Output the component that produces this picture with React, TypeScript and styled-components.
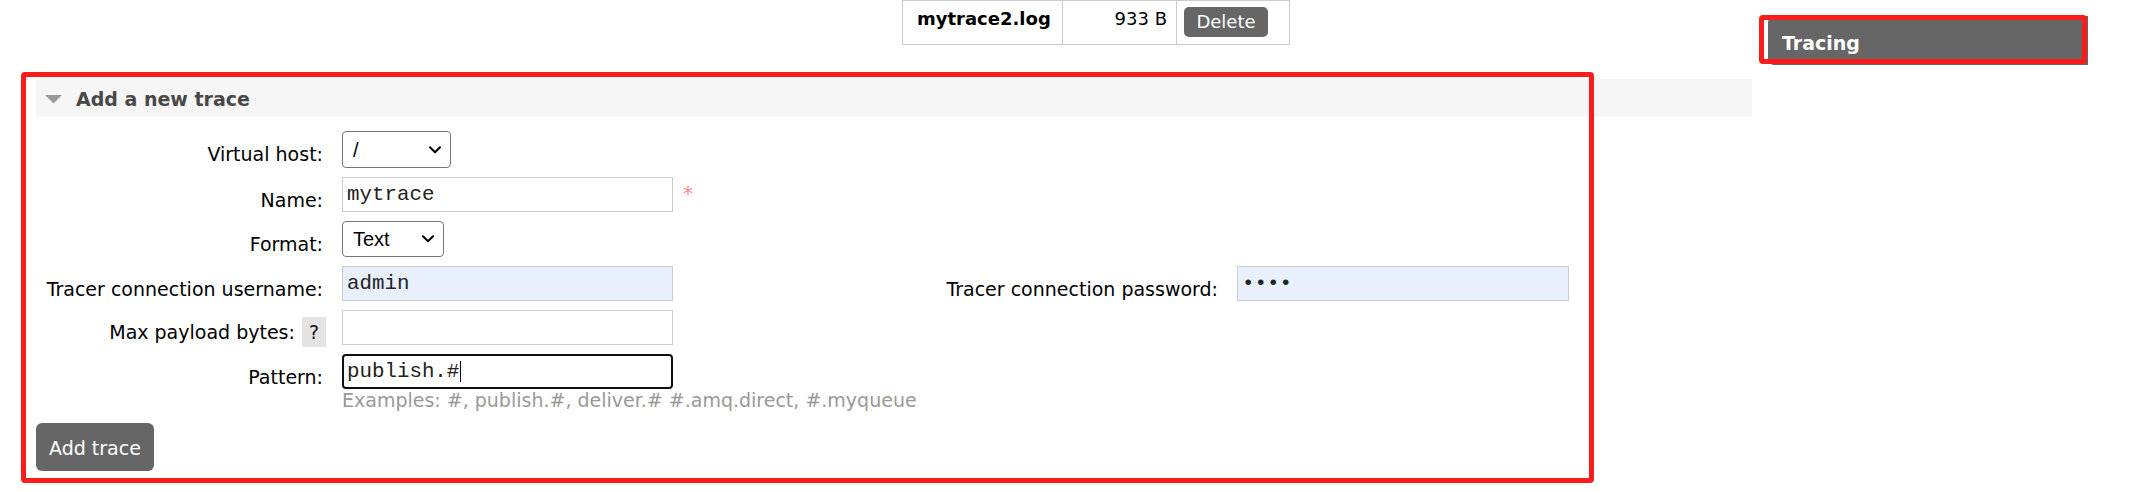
import React from "react";
import styled, { createGlobalStyle } from "styled-components";

const GlobalStyle = createGlobalStyle`
  html, body { margin: 0; padding: 0; background: #fff; }
  body {
    font-family: "DejaVu Sans", Verdana, sans-serif;
    font-size: 19px;
    color: #000;
  }
  * { box-sizing: border-box; }
`;

const Page = styled.div`
  display: flex;
  align-items: flex-start;
  gap: 16px;
  min-height: 492px;
  padding-left: 36px;
`;

const Main = styled.main`
  flex: none;
  width: 1716px;
`;

const FilesTable = styled.table`
  margin-left: 866px;
  border-collapse: collapse;
  table-layout: fixed;
  width: 387px;
  font-size: 18px;
`;

const Col = styled.col<{ $w: number }>`
  width: ${(p) => p.$w}px;
`;

const Row = styled.tr`
  height: 44px;
`;

const Td = styled.td<{ $align?: "left" | "right"; $bold?: boolean; $pl?: number; $pr?: number; $pt?: number }>`
  border: 1px solid #ccc;
  vertical-align: top;
  white-space: nowrap;
  line-height: 22px;
  padding: ${(p) => p.$pt ?? 7}px ${(p) => p.$pr ?? 9}px 0 ${(p) => p.$pl ?? 14}px;
  text-align: ${(p) => p.$align ?? "left"};
  font-weight: ${(p) => (p.$bold ? "bold" : "normal")};
`;

const SmallButton = styled.button`
  width: 84px;
  height: 30px;
  border: none;
  border-radius: 5px;
  background: #666;
  color: #fff;
  font-family: "DejaVu Sans", Verdana, sans-serif;
  font-size: 18px;
  padding: 0;
  line-height: 30px;
`;

const Section = styled.section`
  position: relative;
  margin-top: 34px;
  padding-bottom: 12px;
`;

const Annotation = styled.div<{ $l: number; $t: number; $w: number; $h: number }>`
  position: absolute;
  z-index: 5;
  left: ${(p) => p.$l}px;
  top: ${(p) => p.$t}px;
  width: ${(p) => p.$w}px;
  height: ${(p) => p.$h}px;
  border: 5px solid #fb1d1b;
  border-radius: 4px;
  pointer-events: none;
`;

const SectionHeader = styled.h2`
  margin: 0;
  height: 38px;
  display: flex;
  align-items: center;
  gap: 14px;
  padding: 2px 0 0 9px;
  background: #f6f6f6;
  color: #484848;
  font-size: 19px;
  font-weight: bold;
`;

const SectionBody = styled.div`
  padding-top: 14px;
`;

const FormGrid = styled.div`
  display: grid;
  width: 1533px;
  grid-template-columns: 290px auto 1fr auto 332px;
  column-gap: 16px;
  row-gap: 9px;
  align-items: start;
`;

const LabelCell = styled.div<{ $col?: number; $help?: boolean }>`
  grid-column: ${(p) => p.$col ?? 1};
  display: flex;
  justify-content: flex-end;
  align-items: baseline;
  gap: 7px;
  padding-top: ${(p) => (p.$help ? 7 : 12)}px;
  padding-right: ${(p) => (p.$help ? 0 : 3)}px;
  margin-bottom: ${(p) => (p.$help ? -2 : 0)}px;
  line-height: 22px;
  white-space: nowrap;
  color: #000;
`;

const HelpBox = styled.span`
  display: inline-block;
  padding: 4px 7px;
  line-height: 22px;
  background: #e4e4e4;
  color: #111;
`;

const FieldCell = styled.div<{ $col?: string }>`
  grid-column: ${(p) => p.$col ?? "2"};
  display: flex;
  align-items: baseline;
  gap: 10px;
`;

const FieldStack = styled.div<{ $col?: string }>`
  grid-column: ${(p) => p.$col ?? "2"};
  display: flex;
  flex-direction: column;
  align-items: flex-start;
`;

const TextInput = styled.input<{ $autofill?: boolean }>`
  width: 331px;
  height: 35px;
  margin: 0;
  padding: 0 4px;
  border: 1px solid #ccc;
  border-radius: 0;
  background: ${(p) => (p.$autofill ? "#e8f0fe" : "#fff")};
  font-family: "Liberation Mono", "Courier New", monospace;
  font-size: 20.8px;
  color: #222;
  outline: none;
`;

const WideInput = styled(TextInput)`
  width: 332px;
`;

const FocusWrap = styled.div`
  position: relative;
  width: 331px;
  height: 35px;
`;

const FocusedInput = styled(TextInput)`
  border: 2px solid #101010;
  border-radius: 4px;
  padding: 0 3px;
`;

const Caret = styled.span`
  position: absolute;
  left: 118px;
  top: 7px;
  width: 1px;
  height: 21px;
  background: #000;
`;

const Mandatory = styled.span`
  color: #f88;
  font-size: 20px;
`;

const SelectWrap = styled.div<{ $w: number; $h: number }>`
  position: relative;
  width: ${(p) => p.$w}px;
  height: ${(p) => p.$h}px;
`;

const Select = styled.select`
  appearance: none;
  -webkit-appearance: none;
  width: 100%;
  height: 100%;
  margin: 0;
  padding: 0 0 0 10px;
  border: 1px solid #767676;
  border-radius: 4px;
  background: #fff;
  font-family: "Liberation Sans", Arial, sans-serif;
  font-size: 20px;
  color: #000;
  outline: none;
`;

const Chevron = styled.svg`
  position: absolute;
  right: 10px;
  top: 50%;
  margin-top: -4px;
  pointer-events: none;
`;

const Examples = styled.div`
  line-height: 22px;
  color: #999;
  white-space: nowrap;
`;

const PrimaryButton = styled.button`
  display: block;
  margin: 12px 0 0;
  height: 48px;
  padding: 2px 13px 0;
  border: none;
  border-radius: 6px;
  background: #666;
  color: #fff;
  font-family: "DejaVu Sans", Verdana, sans-serif;
  font-size: 19px;
  line-height: 22px;
`;

const Nav = styled.nav`
  flex: none;
  width: 320px;
  margin-top: 16px;
`;

const NavItem = styled.div`
  position: relative;
  height: 49px;
  padding: 16px 0 0 14px;
  border-radius: 6px 0 0 6px;
  background: #666;
  color: #fff;
  font-weight: bold;
  font-size: 19px;
  line-height: 22px;
`;

const ChevronIcon = () => (
  <Chevron width="12" height="8" viewBox="0 0 12 8">
    <path d="M1 1.2 L6 6.2 L11 1.2" fill="none" stroke="#000" strokeWidth="2" strokeLinecap="round" strokeLinejoin="round" />
  </Chevron>
);

const Triangle = () => (
  <svg width="17" height="9" viewBox="0 0 17 9">
    <polygon points="0,0 17,0 8.5,8.5" fill="#999" />
  </svg>
);

export default function App() {
  return (
    <>
      <GlobalStyle />
      <Page>
        <Main>
          <FilesTable>
            <colgroup>
              <Col $w={160} />
              <Col $w={114} />
              <Col $w={113} />
            </colgroup>
            <tbody>
              <Row>
                <Td $bold>mytrace2.log</Td>
                <Td $align="right">933 B</Td>
                <Td $pl={7} $pt={6}>
                  <SmallButton>Delete</SmallButton>
                </Td>
              </Row>
            </tbody>
          </FilesTable>

          <Section>
            <SectionHeader>
              <Triangle />
              Add a new trace
            </SectionHeader>
            <SectionBody>
              <FormGrid>
                <LabelCell>Virtual host:</LabelCell>
                <FieldCell>
                  <SelectWrap $w={109} $h={37}>
                    <Select defaultValue="/">
                      <option value="/">/</option>
                    </Select>
                    <ChevronIcon />
                  </SelectWrap>
                </FieldCell>

                <LabelCell>Name:</LabelCell>
                <FieldCell>
                  <TextInput defaultValue="mytrace" readOnly />
                  <Mandatory>*</Mandatory>
                </FieldCell>

                <LabelCell>Format:</LabelCell>
                <FieldCell>
                  <SelectWrap $w={102} $h={36}>
                    <Select defaultValue="text">
                      <option value="text">Text</option>
                      <option value="json">JSON</option>
                    </Select>
                    <ChevronIcon />
                  </SelectWrap>
                </FieldCell>

                <LabelCell>Tracer connection username:</LabelCell>
                <FieldCell>
                  <TextInput $autofill defaultValue="admin" readOnly />
                </FieldCell>
                <LabelCell $col={4}>Tracer connection password:</LabelCell>
                <FieldCell $col="5">
                  <WideInput $autofill type="password" defaultValue="abcd" readOnly />
                </FieldCell>

                <LabelCell $help>
                  Max payload bytes:
                  <HelpBox>?</HelpBox>
                </LabelCell>
                <FieldCell>
                  <TextInput defaultValue="" readOnly />
                </FieldCell>

                <LabelCell>Pattern:</LabelCell>
                <FieldStack $col="2 / -1">
                  <FocusWrap>
                    <FocusedInput defaultValue="publish.#" readOnly />
                    <Caret />
                  </FocusWrap>
                  <Examples>Examples: #, publish.#, deliver.# #.amq.direct, #.myqueue</Examples>
                </FieldStack>
              </FormGrid>
              <PrimaryButton>Add trace</PrimaryButton>
            </SectionBody>
            <Annotation $l={-15} $t={-7} $w={1573} $h={411} />
          </Section>
        </Main>

        <Nav>
          <NavItem>
            Tracing
            <Annotation $l={-9} $t={-1} $w={328} $h={49} />
          </NavItem>
        </Nav>
      </Page>
    </>
  );
}
